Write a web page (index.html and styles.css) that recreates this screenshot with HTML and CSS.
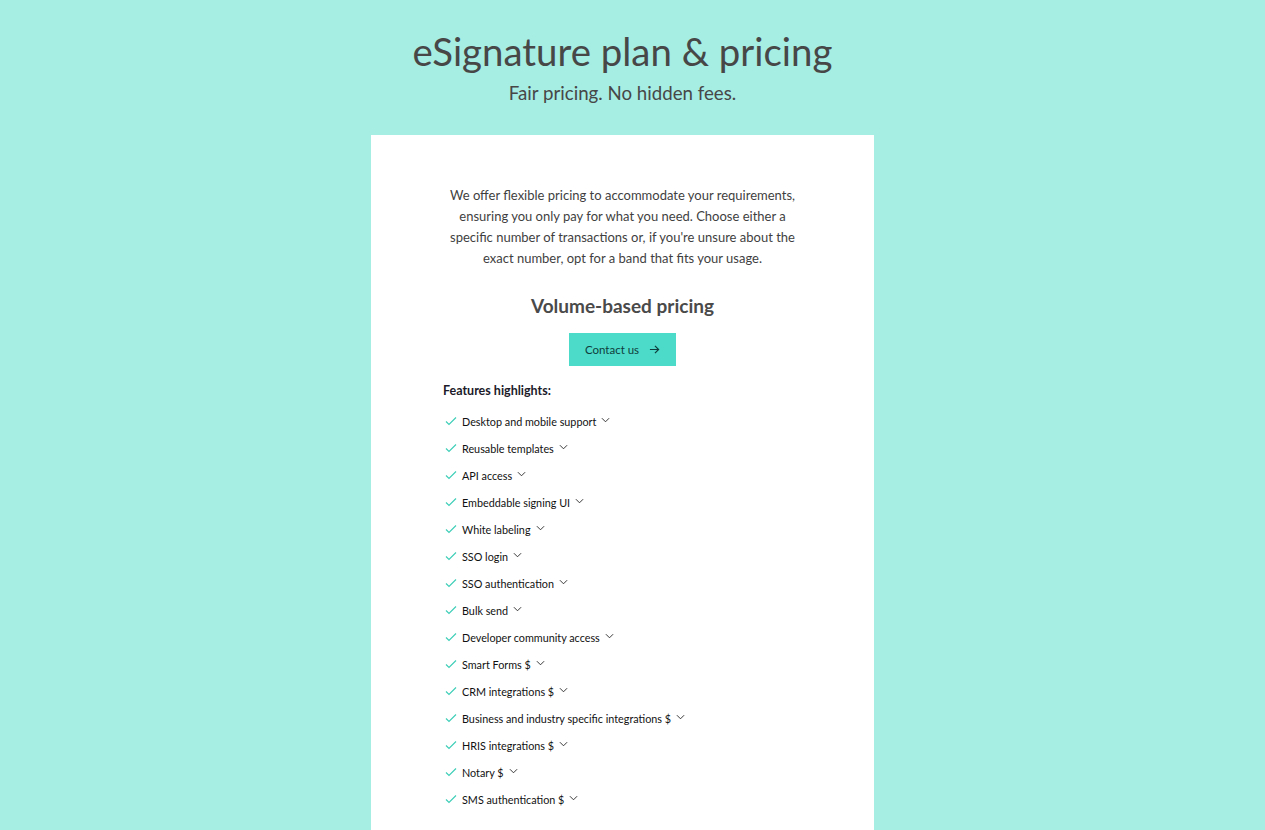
FILE: index.html
```html
<!DOCTYPE html>
<html lang="en">
<head>
<meta charset="utf-8">
<title>eSignature plan &amp; pricing</title>
<link rel="stylesheet" href="styles.css">
</head>
<body>
<main class="page">
  <header class="hero">
    <h1 class="hero-title">eSignature plan &amp; pricing</h1>
    <p class="hero-sub">Fair pricing. No hidden fees.</p>
  </header>
  <section class="card">
    <p class="intro">We offer flexible pricing to accommodate your requirements, ensuring you only pay for what you need. Choose either a specific number of transactions or, if you're unsure about the exact number, opt for a band that fits your usage.</p>
    <h2 class="plan-title">Volume-based pricing</h2>
    <a class="btn" href="#">Contact us
      <svg class="btn-arrow" viewBox="0 0 12 12" width="12" height="12"><path d="M1 6h9.5M6.5 2l4 4-4 4" fill="none" stroke="currentColor" stroke-width="1.3"/></svg>
    </a>
    <div class="features">
      <h3 class="features-title">Features highlights:</h3>
      <ul class="feature-list">
        <li class="feature"><svg class="check" viewBox="0 0 12 10"><path d="M1 5.5l3 3 7-7" fill="none" stroke="#3fcfb8" stroke-width="1.2"/></svg><span>Desktop and mobile support</span><svg class="chev" viewBox="0 0 10 6"><path d="M1 1l4 4 4-4" fill="none" stroke="#222" stroke-width="1"/></svg></li>
        <li class="feature"><svg class="check" viewBox="0 0 12 10"><path d="M1 5.5l3 3 7-7" fill="none" stroke="#3fcfb8" stroke-width="1.2"/></svg><span>Reusable templates</span><svg class="chev" viewBox="0 0 10 6"><path d="M1 1l4 4 4-4" fill="none" stroke="#222" stroke-width="1"/></svg></li>
        <li class="feature"><svg class="check" viewBox="0 0 12 10"><path d="M1 5.5l3 3 7-7" fill="none" stroke="#3fcfb8" stroke-width="1.2"/></svg><span>API access</span><svg class="chev" viewBox="0 0 10 6"><path d="M1 1l4 4 4-4" fill="none" stroke="#222" stroke-width="1"/></svg></li>
        <li class="feature"><svg class="check" viewBox="0 0 12 10"><path d="M1 5.5l3 3 7-7" fill="none" stroke="#3fcfb8" stroke-width="1.2"/></svg><span>Embeddable signing UI</span><svg class="chev" viewBox="0 0 10 6"><path d="M1 1l4 4 4-4" fill="none" stroke="#222" stroke-width="1"/></svg></li>
        <li class="feature"><svg class="check" viewBox="0 0 12 10"><path d="M1 5.5l3 3 7-7" fill="none" stroke="#3fcfb8" stroke-width="1.2"/></svg><span>White labeling</span><svg class="chev" viewBox="0 0 10 6"><path d="M1 1l4 4 4-4" fill="none" stroke="#222" stroke-width="1"/></svg></li>
        <li class="feature"><svg class="check" viewBox="0 0 12 10"><path d="M1 5.5l3 3 7-7" fill="none" stroke="#3fcfb8" stroke-width="1.2"/></svg><span>SSO login</span><svg class="chev" viewBox="0 0 10 6"><path d="M1 1l4 4 4-4" fill="none" stroke="#222" stroke-width="1"/></svg></li>
        <li class="feature"><svg class="check" viewBox="0 0 12 10"><path d="M1 5.5l3 3 7-7" fill="none" stroke="#3fcfb8" stroke-width="1.2"/></svg><span>SSO authentication</span><svg class="chev" viewBox="0 0 10 6"><path d="M1 1l4 4 4-4" fill="none" stroke="#222" stroke-width="1"/></svg></li>
        <li class="feature"><svg class="check" viewBox="0 0 12 10"><path d="M1 5.5l3 3 7-7" fill="none" stroke="#3fcfb8" stroke-width="1.2"/></svg><span>Bulk send</span><svg class="chev" viewBox="0 0 10 6"><path d="M1 1l4 4 4-4" fill="none" stroke="#222" stroke-width="1"/></svg></li>
        <li class="feature"><svg class="check" viewBox="0 0 12 10"><path d="M1 5.5l3 3 7-7" fill="none" stroke="#3fcfb8" stroke-width="1.2"/></svg><span>Developer community access</span><svg class="chev" viewBox="0 0 10 6"><path d="M1 1l4 4 4-4" fill="none" stroke="#222" stroke-width="1"/></svg></li>
        <li class="feature"><svg class="check" viewBox="0 0 12 10"><path d="M1 5.5l3 3 7-7" fill="none" stroke="#3fcfb8" stroke-width="1.2"/></svg><span>Smart Forms $</span><svg class="chev" viewBox="0 0 10 6"><path d="M1 1l4 4 4-4" fill="none" stroke="#222" stroke-width="1"/></svg></li>
        <li class="feature"><svg class="check" viewBox="0 0 12 10"><path d="M1 5.5l3 3 7-7" fill="none" stroke="#3fcfb8" stroke-width="1.2"/></svg><span>CRM integrations $</span><svg class="chev" viewBox="0 0 10 6"><path d="M1 1l4 4 4-4" fill="none" stroke="#222" stroke-width="1"/></svg></li>
        <li class="feature"><svg class="check" viewBox="0 0 12 10"><path d="M1 5.5l3 3 7-7" fill="none" stroke="#3fcfb8" stroke-width="1.2"/></svg><span>Business and industry specific integrations $</span><svg class="chev" viewBox="0 0 10 6"><path d="M1 1l4 4 4-4" fill="none" stroke="#222" stroke-width="1"/></svg></li>
        <li class="feature"><svg class="check" viewBox="0 0 12 10"><path d="M1 5.5l3 3 7-7" fill="none" stroke="#3fcfb8" stroke-width="1.2"/></svg><span>HRIS integrations $</span><svg class="chev" viewBox="0 0 10 6"><path d="M1 1l4 4 4-4" fill="none" stroke="#222" stroke-width="1"/></svg></li>
        <li class="feature"><svg class="check" viewBox="0 0 12 10"><path d="M1 5.5l3 3 7-7" fill="none" stroke="#3fcfb8" stroke-width="1.2"/></svg><span>Notary $</span><svg class="chev" viewBox="0 0 10 6"><path d="M1 1l4 4 4-4" fill="none" stroke="#222" stroke-width="1"/></svg></li>
        <li class="feature"><svg class="check" viewBox="0 0 12 10"><path d="M1 5.5l3 3 7-7" fill="none" stroke="#3fcfb8" stroke-width="1.2"/></svg><span>SMS authentication $</span><svg class="chev" viewBox="0 0 10 6"><path d="M1 1l4 4 4-4" fill="none" stroke="#222" stroke-width="1"/></svg></li>
      </ul>
    </div>
  </section>
</main>
</body>
</html>
```

FILE: styles.css
```css
* { box-sizing: border-box; }
html, body { margin: 0; padding: 0; }
body {
  background: #a6ede4;
  font-family: "Lato", "Liberation Sans", sans-serif;
  color: #4a4a4a;
}
.page {
  width: 1245px;
  display: flex;
  flex-direction: column;
  align-items: center;
  padding-top: 27px;
}
.hero { text-align: center; }
.hero-title {
  margin: 0;
  font-size: 38.4px;
  font-weight: 400;
  line-height: 48px;
  color: #474747;
}
.hero-sub {
  margin: 6px 0 0;
  font-size: 18.7px;
  line-height: 24px;
  color: #474747;
}
.card {
  margin-top: 30px;
  width: 503px;
  background: #fff;
  display: flex;
  flex-direction: column;
  align-items: center;
  padding: 50px 72px 40px;
  min-height: 720px;
}
.intro {
  margin: 0;
  width: 350px;
  text-align: center;
  font-size: 13px;
  line-height: 21px;
  color: #3f3f3f;
}
.plan-title {
  margin: 24px 0 0;
  font-size: 19px;
  font-weight: 700;
  line-height: 26px;
  color: #4a4a4a;
}
.btn {
  margin-top: 14px;
  width: 107px;
  height: 33px;
  background: #4cdbc8;
  color: #0f3d3d;
  text-decoration: none;
  font-size: 11.5px;
  display: flex;
  align-items: center;
  justify-content: center;
  gap: 10px;
}
.btn-arrow { width: 11px; height: 11px; }
.features { align-self: stretch; margin-top: 16px; }
.features-title {
  margin: 0;
  font-size: 12.5px;
  font-weight: 700;
  line-height: 18px;
  color: #1b1b2a;
}
.feature-list {
  list-style: none;
  margin: 13px 0 0;
  padding: 0;
  display: flex;
  flex-direction: column;
  gap: 11px;
}
.feature {
  display: flex;
  align-items: center;
  height: 16px;
  font-size: 10.8px;
  color: #111;
}
.check { width: 12px; height: 10px; margin: 0 5px 0 2px; }
.chev { width: 9px; height: 6px; margin-left: 5px; margin-top: -3px; }
```
